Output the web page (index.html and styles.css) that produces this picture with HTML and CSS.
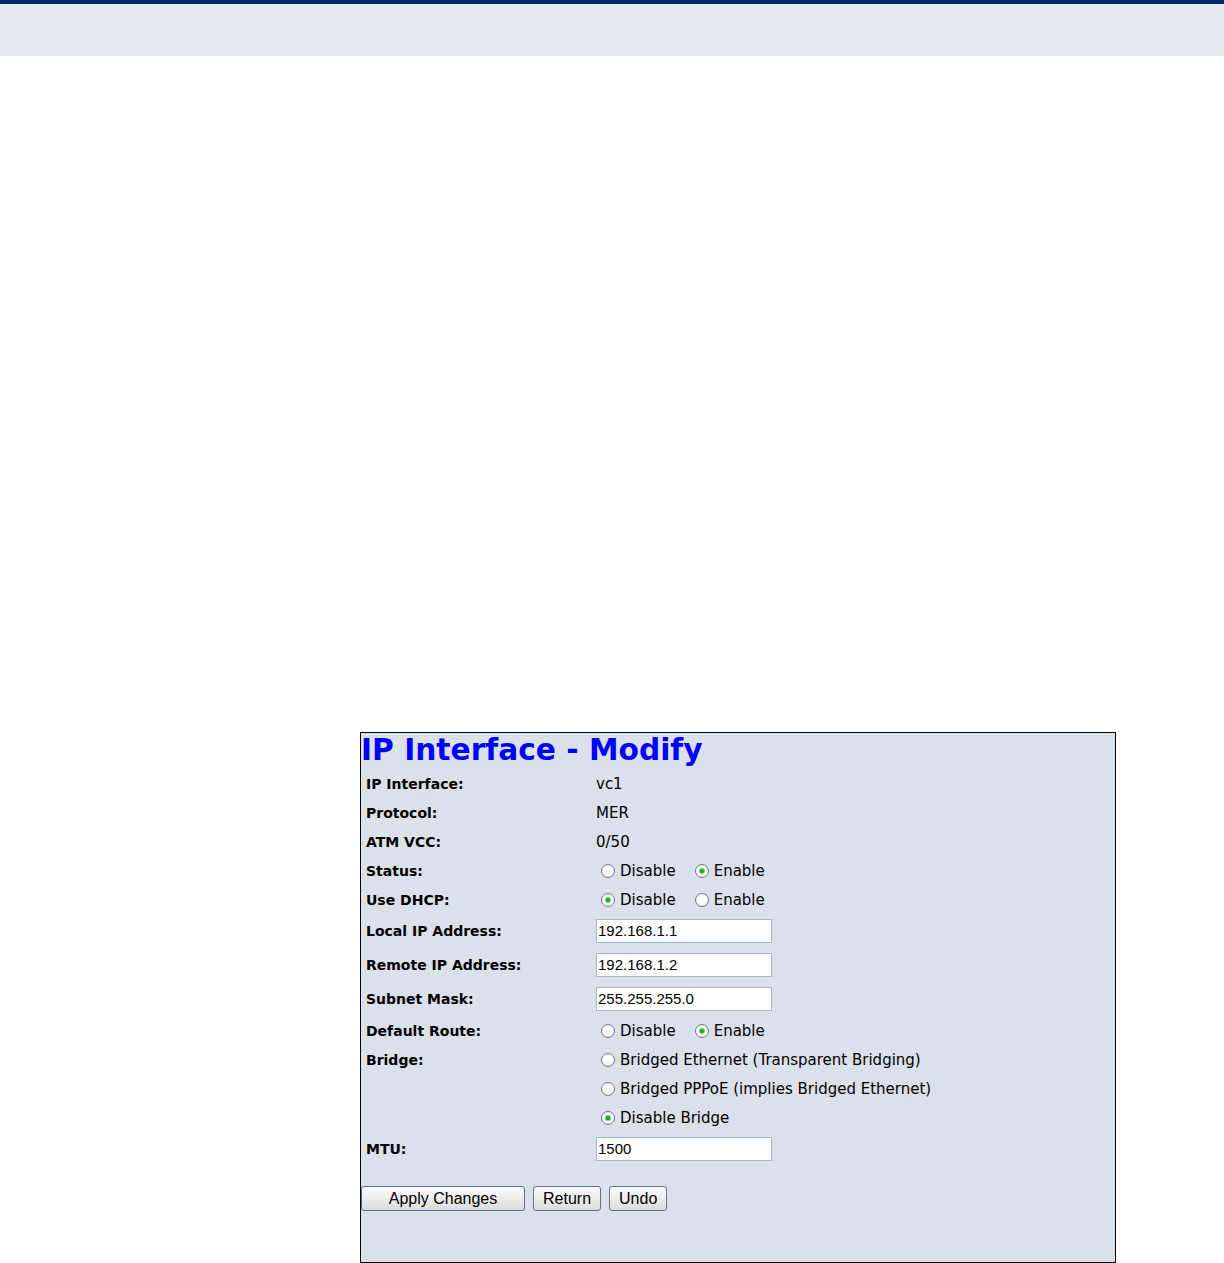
FILE: index.html
```html
<!DOCTYPE html>
<html lang="en">
<head>
    <meta charset="UTF-8">
    <title>IP Interface - Modify</title>
    <link rel="stylesheet" href="styles.css">
</head>
<body>
    <div class="topbar"></div>
    <div class="band"></div>

    <div class="page">
        <div class="shot">
            <h1>IP Interface - Modify</h1>
            <form class="form">
                <div class="label">IP Interface:</div>
                <div class="value">vc1</div>

                <div class="label">Protocol:</div>
                <div class="value">MER</div>

                <div class="label">ATM VCC:</div>
                <div class="value">0/50</div>

                <div class="label">Status:</div>
                <div class="value">
                    <label class="opt"><input type="radio" name="status">Disable</label>
                    <label class="opt"><input type="radio" name="status" checked>Enable</label>
                </div>

                <div class="label">Use DHCP:</div>
                <div class="value">
                    <label class="opt"><input type="radio" name="dhcp" checked>Disable</label>
                    <label class="opt"><input type="radio" name="dhcp">Enable</label>
                </div>

                <div class="label tall">Local IP Address:</div>
                <div class="value tall"><input type="text" class="field" value="192.168.1.1"></div>

                <div class="label tall">Remote IP Address:</div>
                <div class="value tall"><input type="text" class="field" value="192.168.1.2"></div>

                <div class="label tall">Subnet Mask:</div>
                <div class="value tall"><input type="text" class="field" value="255.255.255.0"></div>

                <div class="label">Default Route:</div>
                <div class="value">
                    <label class="opt"><input type="radio" name="route">Disable</label>
                    <label class="opt"><input type="radio" name="route" checked>Enable</label>
                </div>

                <div class="label">Bridge:</div>
                <div class="value">
                    <label class="opt"><input type="radio" name="bridge">Bridged Ethernet (Transparent Bridging)</label>
                </div>
                <div class="label"></div>
                <div class="value">
                    <label class="opt"><input type="radio" name="bridge">Bridged PPPoE (implies Bridged Ethernet)</label>
                </div>
                <div class="label"></div>
                <div class="value">
                    <label class="opt"><input type="radio" name="bridge" checked>Disable Bridge</label>
                </div>

                <div class="label tall">MTU:</div>
                <div class="value tall"><input type="text" class="field" value="1500"></div>
            </form>

            <div class="buttons">
                <button type="button" class="btn apply">Apply Changes</button>
                <button type="button" class="btn">Return</button>
                <button type="button" class="btn">Undo</button>
            </div>
        </div>
    </div>
</body>
</html>
```

FILE: styles.css
```css
/* Page frame */
body {
    margin: 0;
    font-family: "DejaVu Sans", Verdana, sans-serif;
    background: #ffffff;
    color: #000;
}

.topbar {
    height: 4px;
    background: #00286a;
}

.band {
    height: 52px;
    background: #e5e8f1;
}

.page {
    padding: 676px 0 0 360px;
}

/* Screenshot box */
.shot {
    width: 754px;
    height: 529px;
    border: 1px solid #000;
    background: #dbe1eb;
    overflow: hidden;
}

.shot h1 {
    margin: 0;
    height: 36px;
    line-height: 34px;
    font-size: 29.7px;
    font-weight: bold;
    color: #0000ff;
}

/* Form grid */
.form {
    display: grid;
    grid-template-columns: 230px auto;
    padding-left: 5px;
    font-size: 14px;
}

.label,
.value {
    height: 29px;
    display: flex;
    align-items: center;
}

.label {
    font-weight: bold;
}

.value {
    font-size: 15px;
}

.tall {
    height: 34px;
}

.opt {
    display: flex;
    align-items: center;
    margin-right: 14px;
}

.opt input {
    appearance: none;
    -webkit-appearance: none;
    width: 14px;
    height: 14px;
    margin: 0 5px;
    border: 1px solid #737b86;
    border-radius: 50%;
    background: radial-gradient(circle at 50% 40%, #ffffff 30%, #e1e4e8 100%);
    box-sizing: border-box;
}

.opt input:checked {
    background: radial-gradient(circle, #22ac22 0, #22ac22 2px, #cfe8cf 3px, #ffffff 4px, #e1e4e8 100%);
}

.field {
    width: 176px;
    height: 24px;
    box-sizing: border-box;
    border: 1px solid #a5b6c8;
    padding: 0 1px 2px;
    font-family: "Liberation Sans", Arial, sans-serif;
    font-size: 15px;
    background: #fff;
    outline: none;
}

/* Buttons */
.buttons {
    display: flex;
    gap: 8px;
    margin-top: 20px;
}

.btn {
    height: 25px;
    padding: 0 9px;
    font-family: "Liberation Sans", Arial, sans-serif;
    font-size: 16px;
    color: #000;
    border: 1px solid #61728a;
    border-radius: 3px;
    background: linear-gradient(#fbfbfb, #ececec 50%, #dcdcdc);
}

.apply {
    width: 164px;
}
```
